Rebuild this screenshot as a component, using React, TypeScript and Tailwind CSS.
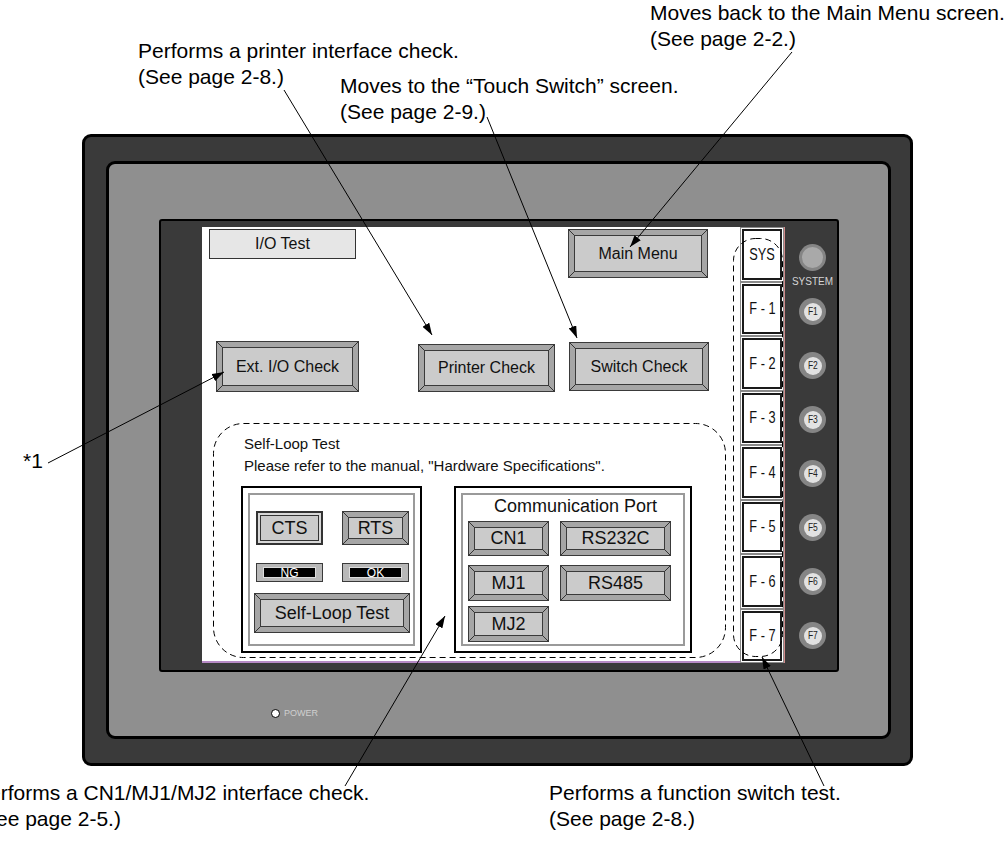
import React from 'react';

// coins des boutons biseautés
function Corner({ pos }: { pos: 'tl' | 'tr' | 'bl' | 'br' }) {
  const cls = {
    tl: '-left-px -top-px',
    tr: '-right-px -top-px',
    bl: '-left-px -bottom-px',
    br: '-right-px -bottom-px',
  }[pos];
  const back = pos === 'tl' || pos === 'br';
  return (
    <svg className={`absolute h-[7px] w-[7px] ${cls}`} viewBox="0 0 7 7">
      {back ? (
        <line x1="0.5" y1="0.5" x2="6.5" y2="6.5" stroke="#333" strokeWidth="1" />
      ) : (
        <line x1="6.5" y1="0.5" x2="0.5" y2="6.5" stroke="#333" strokeWidth="1" />
      )}
    </svg>
  );
}

function Bevel({ className = '', text = 'text-[16px]', children }: { className?: string; text?: string; children: React.ReactNode }) {
  return (
    <div className={`relative shrink-0 border border-[#3a3a3a] bg-[#a6a6a6] p-[5px] ${className}`}>
      <Corner pos="tl" />
      <Corner pos="tr" />
      <Corner pos="bl" />
      <Corner pos="br" />
      <div className={`flex h-full w-full items-center justify-center border border-[#3a3a3a] bg-[#cbcbcb] text-[#111] ${text}`}>
        {children}
      </div>
    </div>
  );
}

function Lamp({ label }: { label: string }) {
  return (
    <div className="flex h-[19px] w-[67px] shrink-0 items-center border border-[#3a3a3a] bg-[#b8b8b8] px-[6px] py-[3px]">
      <div className="flex h-full w-full items-center justify-center border border-[#ddd] bg-black text-[12px] leading-none text-white">
        {label}
      </div>
    </div>
  );
}

const fkeys = ['SYS', 'F - 1', 'F - 2', 'F - 3', 'F - 4', 'F - 5', 'F - 6', 'F - 7'];
const hwKeys = ['F1', 'F2', 'F3', 'F4', 'F5', 'F6', 'F7'];

const notes = [
  { left: 650, top: 0, lines: ['Moves back to the Main Menu screen.', '(See page 2-2.)'] },
  { left: 138, top: 38, lines: ['Performs a printer interface check.', '(See page 2-8.)'] },
  { left: 340, top: 73, lines: ['Moves to the \u201cTouch Switch\u201d screen.', '(See page 2-9.)'] },
  { left: 23, top: 448, lines: ['*1'] },
  { left: -25, top: 780, lines: ['Performs a CN1/MJ1/MJ2 interface check.', '(See page 2-5.)'] },
  { left: 549, top: 780, lines: ['Performs a function switch test.', '(See page 2-8.)'] },
];

const arrows = [
  [284, 90, 432, 335],
  [487, 117, 577, 338],
  [792, 52, 630, 247],
  [48, 463, 224, 372],
  [345, 786, 445, 616],
  [824, 786, 762, 657],
];

export default function App() {
  return (
    <div className="relative h-[847px] w-[1006px] overflow-hidden bg-white font-['Liberation_Sans',Arial,sans-serif] text-[#111]">
      {/* appareil */}
      <div className="pl-[82px] pt-[134px]">
        <div className="h-[632px] w-[831px] rounded-[9px] border-[3px] border-black bg-[#3a3a3a] pl-[21px] pt-[24px]">
          <div className="flex h-[578px] w-[785px] flex-col rounded-[9px] border-[3px] border-black bg-[#8f8f8f] pl-[50px] pt-[55px]">
            {/* cadre écran */}
            <div className="flex h-[453px] w-[680px] rounded-[3px] border-2 border-black bg-[#3a3a3a] pl-[41px] pt-[6px]">
              <div className="flex h-[436px] w-[583px] bg-white">
                {/* zone principale */}
                <div className="flex h-full w-[538px] flex-col border-b-2 border-[#b68ac4]">
                  <div className="flex items-start pt-[2px]">
                    <div className="ml-[7px] flex h-[30px] w-[147px] items-center justify-center border border-[#333] bg-[#e6e6e6] text-[16px]">
                      I/O Test
                    </div>
                    <Bevel className="ml-[212px] h-[49px] w-[140px]">Main Menu</Bevel>
                  </div>
                  <div className="mt-[63px] flex items-start">
                    <Bevel className="ml-[14px] h-[51px] w-[143px]">Ext. I/O Check</Bevel>
                    <Bevel className="ml-[59px] mt-[3px] h-[48px] w-[137px]">Printer Check</Bevel>
                    <Bevel className="ml-[14px] mt-[1px] h-[49px] w-[140px]">Switch Check</Bevel>
                  </div>
                  {/* groupe Self-Loop */}
                  <div className="ml-[11px] mt-[31px] h-[234px] w-[512px] pt-[10px]">
                    <div className="pl-[31px] text-[15px] leading-[22px]">
                      <div>Self-Loop Test</div>
                      <div>Please refer to the manual, "Hardware Specifications".</div>
                    </div>
                    <div className="mt-[9px] flex gap-[32px] pl-[28px]">
                      <div className="h-[167px] w-[181px] border-2 border-black p-[5px]">
                        <div className="flex h-full w-full flex-col border-2 border-[#9a9a9a] pl-[4px] pt-[16px]">
                          <div className="flex gap-[19px] pl-[2px]">
                            <div className="flex h-[34px] w-[67px] items-center justify-center border-2 border-[#333] bg-[#d8d8d8] p-[2px]">
                              <div className="flex h-full w-full items-center justify-center border border-[#333] bg-[#cbcbcb] text-[18px]">CTS</div>
                            </div>
                            <Bevel className="h-[34px] w-[67px]" text="text-[18px]">RTS</Bevel>
                          </div>
                          <div className="mt-[18px] flex gap-[19px] pl-[2px]">
                            <Lamp label="NG" />
                            <Lamp label="OK" />
                          </div>
                          <Bevel className="mt-[11px] h-[40px] w-[156px]" text="text-[18px]">Self-Loop Test</Bevel>
                        </div>
                      </div>
                      <div className="h-[167px] w-[238px] border-2 border-black p-[5px]">
                        <div className="flex h-full w-full flex-col border-2 border-[#9a9a9a] pl-[5px] pt-[1px]">
                          <div className="text-center text-[18px] leading-[20px]">Communication Port</div>
                          <div className="mt-[5px] flex gap-[11px]">
                            <Bevel className="h-[35px] w-[81px]" text="text-[18px]">CN1</Bevel>
                            <Bevel className="h-[35px] w-[111px]" text="text-[18px]">RS232C</Bevel>
                          </div>
                          <div className="mt-[9px] flex gap-[11px]">
                            <Bevel className="h-[36px] w-[81px]" text="text-[18px]">MJ1</Bevel>
                            <Bevel className="h-[36px] w-[111px]" text="text-[18px]">RS485</Bevel>
                          </div>
                          <div className="mt-[5px] flex">
                            <Bevel className="h-[36px] w-[81px]" text="text-[18px]">MJ2</Bevel>
                          </div>
                        </div>
                      </div>
                    </div>
                  </div>
                </div>
                {/* touches de fonction à l'écran */}
                <div className="flex h-full w-[45px] flex-col border-r border-[#d08a8a]">
                  {fkeys.map((k) => (
                    <div key={k} className="flex-1 border border-[#8a8a8a] bg-white p-px">
                      <div className="flex h-full w-full items-center justify-center border-2 border-[#1a1a1a] text-[17px]">
                        <span className="inline-block scale-x-[0.75] whitespace-nowrap">{k}</span>
                      </div>
                    </div>
                  ))}
                </div>
              </div>
              {/* boutons matériels */}
              <div className="flex w-[52px] flex-col items-center pl-[3px] pt-[17px]">
                <div className="flex h-[27px] w-[27px] items-center justify-center rounded-full bg-[#858585]">
                  <div className="h-[21px] w-[21px] rounded-full bg-[#a9a9a9]" />
                </div>
                <div className="mt-[5px] text-[10px] leading-[12px] text-[#d4d4d4]">SYSTEM</div>
                <div className="mt-[10px] flex flex-col gap-[27px]">
                  {hwKeys.map((k) => (
                    <div key={k} className="flex h-[27px] w-[27px] items-center justify-center rounded-full bg-[#858585]">
                      <div className="flex h-[18px] w-[18px] items-center justify-center rounded-full bg-[#e2e2e2] text-[10px] leading-none text-[#222]">
                        <span className="inline-block scale-x-[0.85]">{k}</span>
                      </div>
                    </div>
                  ))}
                </div>
              </div>
            </div>
            {/* témoin POWER */}
            <div className="ml-[112px] mt-[37px] flex items-center gap-[4px]">
              <div className="h-[9px] w-[9px] rounded-full border border-black bg-white" />
              <span className="text-[9px] leading-none text-[#d0d0d0]">POWER</span>
            </div>
          </div>
        </div>
      </div>

      {/* légendes */}
      {notes.map((n, i) => (
        <div
          key={i}
          className="absolute whitespace-nowrap text-[21px] leading-[26px] text-black"
          style={{ left: n.left, top: n.top }}
        >
          {n.lines.map((l) => (
            <div key={l}>{l}</div>
          ))}
        </div>
      ))}

      {/* flèches et contours pointillés */}
      <svg className="pointer-events-none absolute left-0 top-0" width="1006" height="847">
        <defs>
          <marker id="ah" viewBox="0 0 12 8" refX="12" refY="4" markerWidth="12" markerHeight="8" markerUnits="userSpaceOnUse" orient="auto">
            <path d="M0 0 L12 4 L0 8 Z" fill="#000" />
          </marker>
        </defs>
        <rect x="213.5" y="423.5" width="512" height="234" rx="30" fill="none" stroke="#000" strokeWidth="1" strokeDasharray="6 4" />
        <rect x="733.5" y="238.5" width="49" height="418" rx="22" fill="none" stroke="#000" strokeWidth="1" strokeDasharray="6 4" />
        {arrows.map(([x1, y1, x2, y2], i) => (
          <line key={i} x1={x1} y1={y1} x2={x2} y2={y2} stroke="#000" strokeWidth="1" markerEnd="url(#ah)" />
        ))}
      </svg>
    </div>
  );
}
